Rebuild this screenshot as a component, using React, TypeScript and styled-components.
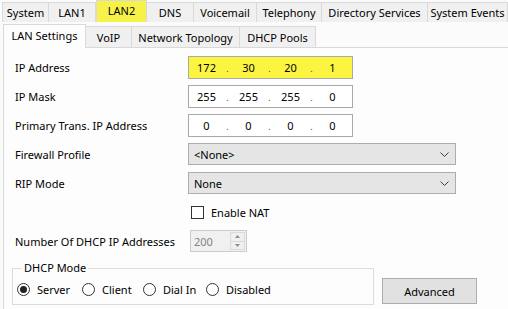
import React from 'react';
import styled, { createGlobalStyle } from 'styled-components';

const Global = createGlobalStyle`
  html, body { margin: 0; padding: 0; background: #fbfbfb; }
  body { font-family: "Noto Sans", "Open Sans", sans-serif; font-size: 11px; color: #000; }
  * { box-sizing: border-box; }
`;

const Window = styled.div`
  width: 508px;
  height: 309px;
  overflow: hidden;
  background: #fbfbfb;
  display: flex;
  flex-direction: column;
`;

const TopTabs = styled.div`
  display: flex;
  align-items: flex-end;
  height: 22px;
  padding-left: 2px;
  flex: none;
`;

const TopTab = styled.div<{ $w: number; $active?: boolean }>`
  width: ${p => p.$w}px;
  flex: none;
  height: ${p => (p.$active ? 22 : 20)}px;
  display: flex;
  align-items: center;
  justify-content: center;
  white-space: nowrap;
  background: ${p => (p.$active ? '#f7f24a' : '#f0f0f0')};
  border: 1px solid #d9d9d9;
  border-left-width: ${p => (p.$active ? 1 : 0)}px;
  border-bottom: none;
  padding-bottom: ${p => (p.$active ? 2 : 0)}px;
  &:first-child { border-left-width: 1px; }
`;

const SubTabs = styled.div`
  display: flex;
  align-items: flex-end;
  height: 25px;
  padding-left: 3px;
  flex: none;
`;

const SubTab = styled.div<{ $w: number; $active?: boolean }>`
  width: ${p => p.$w}px;
  flex: none;
  height: ${p => (p.$active ? 24 : 21)}px;
  margin-bottom: ${p => (p.$active ? -1 : 0)}px;
  position: relative;
  z-index: ${p => (p.$active ? 1 : 0)};
  display: flex;
  align-items: center;
  justify-content: center;
  padding-bottom: ${p => (p.$active ? 2 : 0)}px;
  white-space: nowrap;
  background: ${p => (p.$active ? '#fdfdfd' : '#f0f0f0')};
  border: 1px solid #d9d9d9;
  border-bottom: none;
  border-left-width: ${p => (p.$active ? 1 : 0)}px;
`;

const Panel = styled.div`
  flex: 1;
  margin-left: 3px;
  border-left: 1px solid #d9d9d9;
  border-top: 1px solid #d9d9d9;
  background: #fdfdfd;
  padding: 8px 0 0 11px;
  display: flex;
  flex-direction: column;
`;

const Row = styled.div<{ $mt?: number; $h: number }>`
  display: flex;
  align-items: center;
  height: ${p => p.$h}px;
  margin-top: ${p => p.$mt ?? 0}px;
`;

const Label = styled.div`
  width: 173px;
  flex: none;
  white-space: nowrap;
`;

const IpBox = styled.div<{ $hl?: boolean }>`
  width: 165px;
  height: 23px;
  border: 1px solid #a9a9a9;
  background: ${p => (p.$hl ? '#fbf542' : '#ffffff')};
  display: grid;
  grid-template-columns: 35px 7px 35px 7px 35px 7px 35px;
  align-items: center;
  text-align: center;
`;

const Octet = styled.span``;

const Dot = styled.span`
  font-size: 9px;
  color: #444;
  transform: translateY(1px);
`;

const Select = styled.div`
  width: 268px;
  height: 22px;
  border: 1px solid #adadad;
  background: #e5e5e5;
  display: flex;
  align-items: center;
  justify-content: space-between;
  padding: 0 6px 0 5px;
`;

const Chevron = () => (
  <svg width="9" height="5" viewBox="0 0 9 5">
    <path d="M0.5 0.5 L4.5 4.5 L8.5 0.5" fill="none" stroke="#404040" strokeWidth="1" />
  </svg>
);

const CheckRow = styled.label`
  display: flex;
  align-items: center;
  gap: 7px;
  margin-left: 3px;
`;

const CheckBox = styled.span`
  width: 13px;
  height: 13px;
  border: 1px solid #333;
  background: #fff;
  flex: none;
`;

const Spin = styled.div`
  width: 57px;
  height: 22px;
  margin-left: 2px;
  border: 1px solid #cccccc;
  background: #f0f0f0;
  display: flex;
  align-items: center;
  justify-content: space-between;
  padding: 1px 1px 1px 3px;
  color: #838383;
`;

const SpinButtons = styled.div`
  width: 15px;
  height: 100%;
  display: flex;
  flex-direction: column;
`;

const SpinBtn = styled.div`
  flex: 1;
  display: flex;
  align-items: center;
  justify-content: center;
  background: #f0f0f0;
  border: 1px solid #dadada;
  & + & { border-top: none; }
`;

const Tri = ({ up }: { up?: boolean }) => (
  <svg width="5" height="3" viewBox="0 0 5 3">
    <path d={up ? 'M0 3 L2.5 0 L5 3 Z' : 'M0 0 L2.5 3 L5 0 Z'} fill="#8c8c8c" />
  </svg>
);

const Bottom = styled.div`
  display: flex;
  align-items: flex-end;
  margin-left: -3px;
  margin-top: 8px;
  gap: 8px;
`;

const Group = styled.fieldset`
  margin: 0;
  width: 362px;
  height: 45px;
  border: 1px solid #dcdcdc;
  padding: 0 0 0 4px;
  display: flex;
  align-items: center;
`;

const Legend = styled.legend`
  padding: 0 2px;
  margin-left: 5px;
  line-height: 16px;
`;

const RadioItem = styled.label<{ $w: number }>`
  width: ${p => p.$w}px;
  flex: none;
  display: flex;
  align-items: center;
  gap: 7px;
  margin-top: -2px;
`;

const RadioCircle = styled.span<{ $on?: boolean }>`
  width: 13px;
  height: 13px;
  border-radius: 50%;
  border: 1px solid #333;
  background: #fff;
  display: flex;
  align-items: center;
  justify-content: center;
  flex: none;
  &::after {
    content: '';
    width: 7px;
    height: 7px;
    border-radius: 50%;
    background: ${p => (p.$on ? '#222' : 'transparent')};
  }
`;

const Button = styled.div`
  width: 95px;
  height: 26px;
  margin-bottom: 1px;
  border: 1px solid #adadad;
  background: #e1e1e1;
  display: flex;
  align-items: center;
  justify-content: center;
`;

const topTabs = [
  ['System', 47],
  ['LAN1', 47],
  ['LAN2', 51],
  ['DNS', 47],
  ['Voicemail', 63],
  ['Telephony', 65],
  ['Directory Services', 106],
  ['System Events', 80],
] as const;

const subTabs = [
  ['LAN Settings', 83],
  ['VoIP', 46],
  ['Network Topology', 108],
  ['DHCP Pools', 76],
] as const;

const Ip = ({ v, hl }: { v: string[]; hl?: boolean }) => (
  <IpBox $hl={hl}>
    <Octet>{v[0]}</Octet>
    <Dot>.</Dot>
    <Octet>{v[1]}</Octet>
    <Dot>.</Dot>
    <Octet>{v[2]}</Octet>
    <Dot>.</Dot>
    <Octet>{v[3]}</Octet>
  </IpBox>
);

export default function App() {
  return (
    <Window>
      <Global />
      <TopTabs>
        {topTabs.map(([t, w]) => (
          <TopTab key={t} $w={w} $active={t === 'LAN2'}>{t}</TopTab>
        ))}
      </TopTabs>
      <SubTabs>
        {subTabs.map(([t, w]) => (
          <SubTab key={t} $w={w} $active={t === 'LAN Settings'}>{t}</SubTab>
        ))}
      </SubTabs>
      <Panel>
        <Row $h={23}>
          <Label>IP Address</Label>
          <Ip v={['172', '30', '20', '1']} hl />
        </Row>
        <Row $h={23} $mt={6}>
          <Label>IP Mask</Label>
          <Ip v={['255', '255', '255', '0']} />
        </Row>
        <Row $h={23} $mt={6}>
          <Label>Primary Trans. IP Address</Label>
          <Ip v={['0', '0', '0', '0']} />
        </Row>
        <Row $h={22} $mt={6}>
          <Label>Firewall Profile</Label>
          <Select>
            <span>&lt;None&gt;</span>
            <Chevron />
          </Select>
        </Row>
        <Row $h={22} $mt={7}>
          <Label>RIP Mode</Label>
          <Select>
            <span>None</span>
            <Chevron />
          </Select>
        </Row>
        <Row $h={13} $mt={12}>
          <Label />
          <CheckRow>
            <CheckBox />
            <span>Enable NAT</span>
          </CheckRow>
        </Row>
        <Row $h={22} $mt={11}>
          <Label>Number Of DHCP IP Addresses</Label>
          <Spin>
            <span>200</span>
            <SpinButtons>
              <SpinBtn><Tri up /></SpinBtn>
              <SpinBtn><Tri /></SpinBtn>
            </SpinButtons>
          </Spin>
        </Row>
        <Bottom>
          <Group>
            <Legend>DHCP Mode</Legend>
            <RadioItem $w={65}><RadioCircle $on />Server</RadioItem>
            <RadioItem $w={61}><RadioCircle />Client</RadioItem>
            <RadioItem $w={63}><RadioCircle />Dial In</RadioItem>
            <RadioItem $w={80}><RadioCircle />Disabled</RadioItem>
          </Group>
          <Button>Advanced</Button>
        </Bottom>
      </Panel>
    </Window>
  );
}
